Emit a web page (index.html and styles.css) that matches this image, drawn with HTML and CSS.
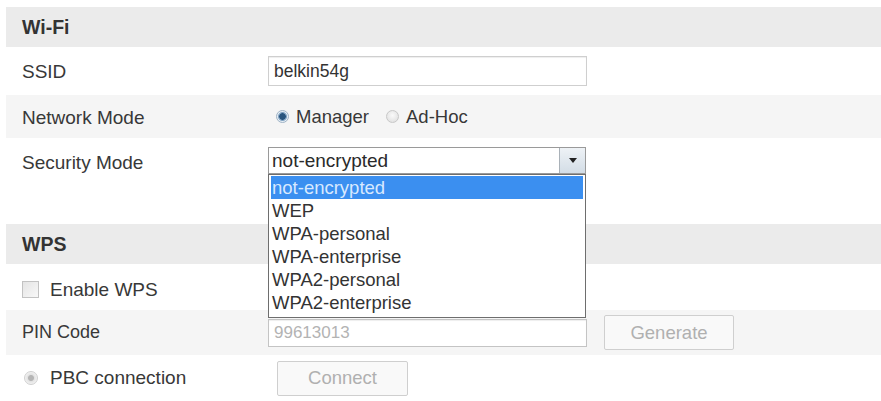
FILE: index.html
```html
<!DOCTYPE html>
<html>
<head>
<meta charset="utf-8">
<link rel="stylesheet" href="styles.css">
</head>
<body>
<div class="page">
  <div class="section-head">Wi-Fi</div>
  <div class="row r-ssid">
    <div class="label">SSID</div>
    <div class="field"><div class="input">belkin54g</div></div>
  </div>
  <div class="row alt r-mode">
    <div class="label">Network Mode</div>
    <div class="field">
      <span class="radio checked"></span><span class="opt-text">Manager</span>
      <span class="radio"></span><span class="opt-text">Ad-Hoc</span>
    </div>
  </div>
  <div class="row r-sec">
    <div class="label">Security Mode</div>
    <div class="field">
      <div class="select">
        <span class="select-value">not-encrypted</span>
        <span class="select-btn"><span class="tri"></span></span>
        <ul class="dropdown">
          <li class="sel">not-encrypted</li>
          <li>WEP</li>
          <li>WPA-personal</li>
          <li>WPA-enterprise</li>
          <li>WPA2-personal</li>
          <li>WPA2-enterprise</li>
        </ul>
      </div>
    </div>
  </div>
  <div class="spacer"></div>
  <div class="section-head">WPS</div>
  <div class="row r-enable">
    <div class="check-label"><span class="checkbox"></span><span>Enable WPS</span></div>
  </div>
  <div class="row alt r-pin">
    <div class="label">PIN Code</div>
    <div class="field">
      <div class="input disabled">99613013</div>
      <div class="button gen">Generate</div>
    </div>
  </div>
  <div class="row r-pbc">
    <div class="label pbc"><span class="radio dis"></span><span>PBC connection</span></div>
    <div class="field"><div class="button connect">Connect</div></div>
  </div>
</div>
</body>
</html>
```

FILE: styles.css
```css
html, body {
  margin: 0;
  padding: 0;
  background: #ffffff;
}
body {
  font-family: "Liberation Sans", Arial, sans-serif;
  font-size: 18px;
  color: #383838;
}
.page {
  padding: 7px 0 0 6px;
}
.section-head {
  height: 40px;
  background: #ebebeb;
  padding-left: 16px;
  display: flex;
  align-items: center;
  font-weight: bold;
  font-size: 19.5px;
  color: #333;
}
.row {
  display: flex;
  align-items: center;
}
.row.alt {
  background: #f5f5f5;
}
.r-ssid { height: 48px; }
.r-mode { height: 43px; }
.r-sec { height: 43px; align-items: flex-start; }
.spacer { height: 43px; }
.r-enable { height: 46px; }
.r-pin { height: 45px; }
.r-pbc { height: 46px; }
.label {
  width: 246px;
  padding-left: 16px;
  flex: none;
}
.r-ssid .label, .r-mode .label, .r-sec .label {
  font-size: 19px;
  padding-top: 2px;
}
.r-sec .label { padding-top: 14px; }
.field {
  display: flex;
  align-items: center;
}
.input {
  box-sizing: border-box;
  width: 319px;
  height: 30px;
  border: 1px solid #cfcfcf;
  box-shadow: inset 0 1px 1px #eee;
  background: #fff;
  padding-left: 5px;
  display: flex;
  align-items: center;
  color: #333;
  font-size: 17.5px;
}
.input.disabled {
  height: 28px;
  color: #b3b3b3;
  border-color: #c4c4c4;
  font-size: 17px;
}
.radio {
  width: 13px;
  height: 13px;
  border-radius: 50%;
  box-sizing: border-box;
  border: 1px solid #c8c8c8;
  background: radial-gradient(circle at 50% 40%, #fafafa, #dcdcdc);
  display: inline-block;
  position: relative;
  flex: none;
}
.radio.checked {
  border-color: #9fb3c6;
  background: radial-gradient(circle at 50% 50%, #2a557e 0 3px, #7ea0c0 3.5px 4px, #e6eef5 5px);
}
.r-mode .radio { margin-left: 8px; }
.r-mode .radio + .opt-text { margin-left: 7px; }
.r-mode .opt-text + .radio { margin-left: 17px; }
.opt-text { font-size: 18.5px; }
.select {
  position: relative;
  box-sizing: border-box;
  width: 318px;
  height: 27px;
  margin-top: 9px;
  border: 1px solid #9a9a9a;
  background: #fff;
  display: flex;
  align-items: center;
}
.select-value {
  flex: 1;
  padding-left: 3px;
  font-size: 19px;
  color: #2a2a2a;
}
.select-btn {
  align-self: stretch;
  width: 25px;
  border-left: 1px solid #a9b1b8;
  background: linear-gradient(#eef2f6, #d3dde6);
  display: flex;
  align-items: center;
  justify-content: center;
}
.tri {
  width: 0;
  height: 0;
  border-left: 4px solid transparent;
  border-right: 4px solid transparent;
  border-top: 5px solid #222;
}
.dropdown {
  position: absolute;
  left: -1px;
  top: 26px;
  width: 318px;
  box-sizing: border-box;
  margin: 0;
  padding: 1px 2px 3px 2px;
  list-style: none;
  border: 1px solid #6e6e6e;
  background: #fff;
  font-size: 18.5px;
  color: #333;
  z-index: 5;
}
.dropdown li {
  height: 23px;
  line-height: 23px;
  padding-left: 1px;
}
.dropdown li.sel {
  background: #3b8ff0;
  color: #d8e9ff;
}
.check-label {
  display: flex;
  align-items: center;
  padding-left: 16px;
  padding-top: 5px;
  font-size: 19px;
}
.checkbox {
  width: 17px;
  height: 17px;
  box-sizing: border-box;
  border: 1px solid #c2c2c2;
  background: linear-gradient(135deg, #e4e4e4, #f8f8f8);
  margin-right: 11px;
}
.label.pbc {
  display: flex;
  align-items: center;
  font-size: 19px;
  padding-left: 18px;
  width: 244px;
}
.radio.dis {
  width: 14px;
  height: 14px;
  border-color: #d0d0d0;
  background: radial-gradient(circle at 50% 50%, #b5b5b5 0 2.5px, #e2e2e2 3.5px, #f2f2f2 6px);
  margin-right: 12px;
}
.button {
  box-sizing: border-box;
  height: 35px;
  border: 1px solid #cfcfcf;
  border-radius: 2px;
  background: #f9f9f9;
  color: #b0b0b0;
  display: flex;
  align-items: center;
  justify-content: center;
  font-size: 18.5px;
}
.button.gen {
  width: 130px;
  margin-left: 17px;
}
.button.connect {
  width: 131px;
  margin-left: 9px;
}
```
